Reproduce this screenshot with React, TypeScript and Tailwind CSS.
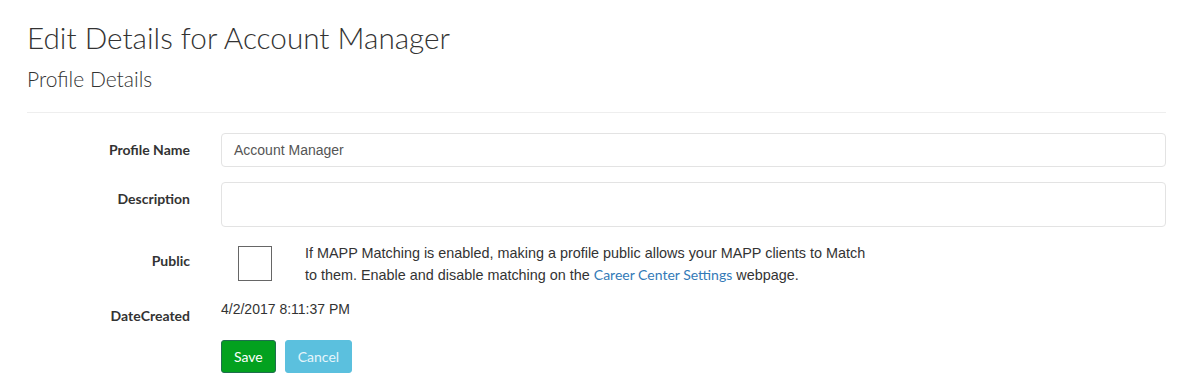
import React from "react";

export default function App() {
  const lato = { fontFamily: "Lato, 'Liberation Sans', sans-serif" };
  return (
    <div className="w-[1181px] h-[384px] bg-white text-[#333] pl-[27px] pr-[15px] font-['Lato',sans-serif]">
      <h1 className="pt-[21px] text-[29.7px] font-light leading-[33px] text-[#333]">
        Edit Details for Account Manager
      </h1>
      <h3 className="mt-[14px] text-[21px] font-light leading-[22px] text-[#333]">Profile Details</h3>
      <div className="mt-[22px] h-px bg-[#eee]" />

      <div className="mt-[20px] flex">
        <label className="w-[163px] shrink-0 text-right text-[14px] font-bold leading-[34px]">Profile Name</label>
        <div className="ml-[31px] flex-1">
          <div className="h-[34px] rounded-[4px] border border-[#e3e3e3] bg-white pl-[12px] flex items-center font-['Liberation_Sans',Arial,sans-serif] text-[14px] text-[#555]">
            Account Manager
          </div>
        </div>
      </div>

      <div className="mt-[15px] flex">
        <label className="w-[163px] shrink-0 text-right text-[14px] font-bold leading-[34px]">Description</label>
        <div className="ml-[31px] flex-1">
          <div className="h-[45px] rounded-[4px] border border-[#e3e3e3] bg-white" />
        </div>
      </div>

      <div className="mt-[19px] flex">
        <label className="w-[163px] shrink-0 pt-[5px] text-right text-[14px] font-bold leading-[20px]">Public</label>
        <div className="ml-[31px] flex">
          <div className="ml-[17px] h-[35px] w-[34px] border border-[#666] bg-white" />
          <p className="ml-[33px] mt-[-3px] w-[564px] font-['Liberation_Sans',Arial,sans-serif] text-[14.4px] leading-[21px] text-[#333]">
            If MAPP Matching is enabled, making a profile public allows your MAPP clients to Match to them. Enable and disable matching on the{" "}
            <a className="text-[#337ab7] text-[14px]" style={lato}>Career Center Settings</a> webpage.
          </p>
        </div>
      </div>

      <div className="mt-[13px] flex">
        <label className="w-[163px] shrink-0 pt-[7px] text-right text-[14px] font-bold leading-[20px]">DateCreated</label>
        <div className="ml-[31px] font-['Liberation_Sans',Arial,sans-serif] text-[14px] leading-[20px] text-[#333]">
          4/2/2017 8:11:37 PM
        </div>
      </div>

      <div className="mt-[14px] ml-[194px] flex gap-[9px]">
        <button className="h-[33px] rounded-[3px] border border-[#1f6e4e] bg-[#03a11f] px-[12px] text-[14px] text-white">
          Save
        </button>
        <button className="h-[33px] rounded-[3px] border border-[#5bc0de] bg-[#5bc0de] px-[12px] text-[14px] text-[#e6f5fb]">
          Cancel
        </button>
      </div>
    </div>
  );
}
